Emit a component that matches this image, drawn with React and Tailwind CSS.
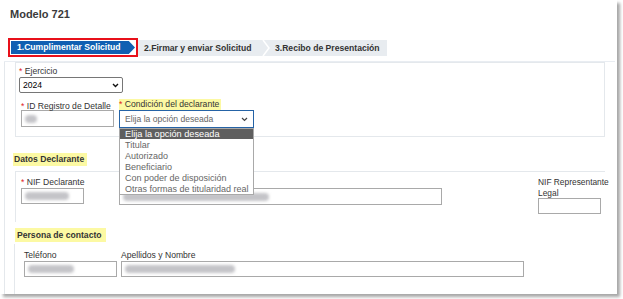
export default function App() {
  const blur = "block h-[8px] bg-[#c4c4c8] blur-[1.5px] rounded-sm";

  return (
    <div className="w-[623px] h-[299px] bg-white font-['Liberation_Sans',Arial,sans-serif] text-[#333]">
      <div className="relative w-[617px] h-[294px] bg-white shadow-[3px_3px_3px_rgba(0,0,0,0.35)] overflow-hidden">
        <div className="h-[38px] pl-[10px] pt-[8px] text-[11px] font-bold leading-[13px] text-[#3a3a3a]">
          Modelo 721
        </div>

        {/* pasos */}
        <div className="flex items-center ml-[8px] h-[19px]">
          <div className="border-2 border-[#e8101a] h-[19px] w-[130px] p-[1px]">
            <div className="h-full bg-[#105fb2] [clip-path:polygon(0_0,95%_0,100%_50%,95%_100%,0_100%)] text-white text-[8.6px] font-bold pl-[6px] leading-[13px] whitespace-nowrap">
              1.Cumplimentar Solicitud
            </div>
          </div>
          <div className="flex items-center h-[16px] bg-[#e8ecf0] w-[249px] text-[8.6px] font-bold text-[#333] leading-[16px] whitespace-nowrap">
            <span className="pl-[6px] w-[124px]">2.Firmar y enviar Solicitud</span>
            <svg width="8" height="16" viewBox="0 0 8 16">
              <polyline points="1,0 7,8 1,16" fill="none" stroke="#ffffff" strokeWidth="1.5" />
            </svg>
            <span className="pl-[5px]">3.Recibo de Presentación</span>
          </div>
        </div>

        <div className="mt-[4px] h-px bg-[#e9edf2] ml-[4px] mr-[2px]" />

        <div className="ml-[4px] border-l border-[#e4e8ec] pl-[10px] h-[240px] text-[8.6px]">
          {/* bloque 1 */}
          <div className="border border-[#e4e8ec] w-[590px] h-[75px] pl-[3px] pt-[3px]">
            <div className="leading-[11px] h-[11px]">
              <span className="text-[#e01b1b]">*</span> Ejercicio
            </div>
            <div className="flex items-center justify-between w-[104px] h-[16px] border border-[#767676] rounded-[2px] px-[3px] text-black text-[8.6px]">
              <span>2024</span>
              <svg width="7" height="5" viewBox="0 0 7 5">
                <polyline points="1,1 3.5,3.5 6,1" fill="none" stroke="#111" strokeWidth="1.4" />
              </svg>
            </div>
            <div className="flex mt-[6px] gap-[5px] ml-[2px]">
              <div className="w-[93px] pt-[4px]">
                <div className="leading-[7px] h-[7px] whitespace-nowrap">
                  <span className="text-[#e01b1b]">*</span> ID Registro de Detalle
                </div>
                <div className="h-[17px] border border-[#a9a9a9] flex items-center pl-[3px]">
                  <span className={blur + " w-[12px]"} />
                </div>
              </div>
              <div className="w-[135px]">
                <div className="h-[11px] leading-[11px] whitespace-nowrap">
                  <span className="bg-[#fcf9a3] pr-[2px] inline-block">
                    <span className="text-[#e01b1b]">*</span> Condición del declarante
                  </span>
                </div>
                <div className="h-[18px] border-[1.5px] border-[#2563a6] flex items-center justify-between pl-[5px] pr-[5px] text-[#666] whitespace-nowrap">
                  <span>Elija la opción deseada</span>
                  <svg width="7" height="5" viewBox="0 0 7 5">
                    <polyline points="1,1 3.5,3.5 6,1" fill="none" stroke="#444" strokeWidth="1.2" />
                  </svg>
                </div>
              </div>
            </div>
          </div>

          <div className="mt-[16px] -ml-[2px] h-[13px]">
            <span className="bg-[#fcf9a3] font-bold px-[1px] leading-[13px] inline-block w-[74px] whitespace-nowrap">
              Datos Declarante
            </span>
          </div>

          {/* bloque 2 */}
          <div className="mt-[5px] border-t border-l border-[#e4e8ec] w-[590px] h-[51px] flex pl-[5px] pt-[5px]">
            <div className="w-[63px]">
              <div className="h-[11px] leading-[11px] whitespace-nowrap">
                <span className="text-[#e01b1b]">*</span> NIF Declarante
              </div>
              <div className="h-[16px] border border-[#a9a9a9] flex items-center pl-[3px]">
                <span className={blur + " w-[44px]"} />
              </div>
            </div>
            <div className="ml-[35px] w-[323px] pt-[11px]">
              <div className="h-[17px] border border-[#a9a9a9] flex items-center pl-[3px]">
                <span className={blur + " w-[146px] h-[5px]"} />
              </div>
            </div>
            <div className="ml-[96px] w-[63px]">
              <div className="h-[21px] leading-[10.5px] text-[8.4px] whitespace-nowrap">
                NIF Representante
                <br />
                Legal
              </div>
              <div className="h-[16px] border border-[#a9a9a9]" />
            </div>
          </div>

          <div className="mt-[6px] h-[14px]">
            <span className="bg-[#fcf9a3] font-bold px-[2px] leading-[14px] inline-block w-[91px] whitespace-nowrap">
              Persona de contacto
            </span>
          </div>

          {/* bloque 3 */}
          <div className="mt-[2px] -ml-[1px] border-l border-[#e4e8ec] h-[52px] flex gap-[4px] pl-[9px] pt-[6px]">
            <div className="w-[93px]">
              <div className="h-[11px] leading-[11px]">Teléfono</div>
              <div className="h-[16px] border border-[#a9a9a9] flex items-center pl-[3px]">
                <span className={blur + " w-[46px]"} />
              </div>
            </div>
            <div className="w-[403px]">
              <div className="h-[11px] leading-[11px]">Apellidos y Nombre</div>
              <div className="h-[16px] border border-[#a9a9a9] flex items-center pl-[3px]">
                <span className={blur + " w-[110px]"} />
              </div>
            </div>
          </div>
        </div>

        {/* lista desplegada */}
        <div className="absolute left-[119px] top-[128px] w-[135px] h-[67px] border border-[#a9a9a9] bg-white text-[9px] text-[#666] leading-[11px] whitespace-nowrap overflow-hidden">
          <div className="bg-[#5f5f5f] text-white pl-[5px] h-[10px] leading-[10px] text-[9.2px]">Elija la opción deseada</div>
          <div className="pl-[5px] pt-[1px]">Titular</div>
          <div className="pl-[5px]">Autorizado</div>
          <div className="pl-[5px]">Beneficiario</div>
          <div className="pl-[5px]">Con poder de disposición</div>
          <div className="pl-[5px]">Otras formas de titularidad real</div>
        </div>
      </div>
    </div>
  );
}
